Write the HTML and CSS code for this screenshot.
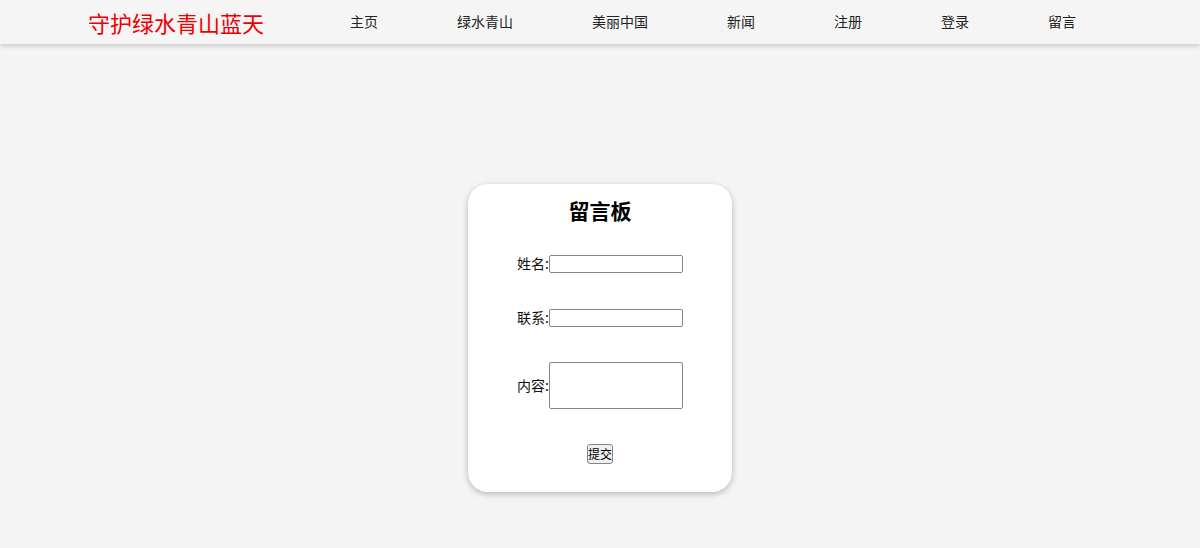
FILE: index.html
```html
<!DOCTYPE html>
<html lang="zh">
<head>
<meta charset="utf-8">
<title>留言</title>
<link rel="stylesheet" href="styles.css">
</head>
<body>
<header class="topbar">
  <div class="logo">守护绿水青山蓝天</div>
  <nav class="nav">
    <a href="#">主页</a>
    <a href="#">绿水青山</a>
    <a href="#">美丽中国</a>
    <a href="#">新闻</a>
    <a href="#">注册</a>
    <a href="#">登录</a>
    <a href="#">留言</a>
  </nav>
</header>
<main class="main">
  <form class="card">
    <h2 class="title">留言板</h2>
    <div class="row"><label>姓名:</label><input class="field" type="text"></div>
    <div class="row"><label>联系:</label><input class="field" type="text"></div>
    <div class="row"><label>内容:</label><textarea class="field area"></textarea></div>
    <div class="row"><button class="btn" type="button">提交</button></div>
  </form>
</main>
</body>
</html>
```
FILE: styles.css
```css
html, body {
  margin: 0;
  padding: 0;
}
body {
  background: #f4f4f4;
  font-family: "Noto Sans CJK SC", "Noto Sans", sans-serif;
  color: #111;
  height: 548px;
  overflow: hidden;
}
.topbar {
  height: 44px;
  background: #f5f5f5;
  box-shadow: 0 2px 5px rgba(0, 0, 0, 0.18);
  display: flex;
  align-items: flex-start;
  padding-left: 88px;
}
.logo {
  color: #ee0000;
  font-size: 22px;
  line-height: 44px;
  width: 176px;
  white-space: nowrap;
}
.nav {
  display: flex;
  gap: 79px;
  margin-left: 86px;
}
.nav a {
  color: #222;
  text-decoration: none;
  font-size: 14px;
  line-height: 42px;
}
.main {
  display: flex;
  justify-content: center;
  padding-top: 140px;
}
.card {
  width: 264px;
  height: 308px;
  box-sizing: border-box;
  background: #fff;
  border-radius: 20px;
  box-shadow: 0 2px 6px rgba(0, 0, 0, 0.25);
  padding-top: 11px;
  display: flex;
  flex-direction: column;
  align-items: center;
}
.title {
  margin: 0 0 30px 0;
  font-size: 21px;
  line-height: 30px;
  font-weight: bold;
  color: #000;
}
.row {
  display: flex;
  align-items: center;
  justify-content: center;
  font-size: 14px;
  margin-bottom: 36px;
}
.row:nth-of-type(2) {
  margin-bottom: 35px;
}
.row:nth-of-type(3) {
  margin-bottom: 35px;
}
.row label {
  line-height: 16px;
  padding-bottom: 2px;
}
.field {
  width: 134px;
  height: 18px;
  box-sizing: border-box;
  border: 1px solid #858585;
  border-radius: 2px;
  margin: 0;
  padding: 1px 2px;
  background: #fff;
  font-size: 13px;
}
.area {
  height: 47px;
  resize: none;
}
.btn {
  font-family: "Noto Sans CJK SC", sans-serif;
  font-size: 12px;
  line-height: 16px;
  height: 20px;
  width: 26px;
  padding: 0;
  border: 1px solid #858585;
  border-radius: 3px;
  background: #efefef;
  color: #000;
}
```
